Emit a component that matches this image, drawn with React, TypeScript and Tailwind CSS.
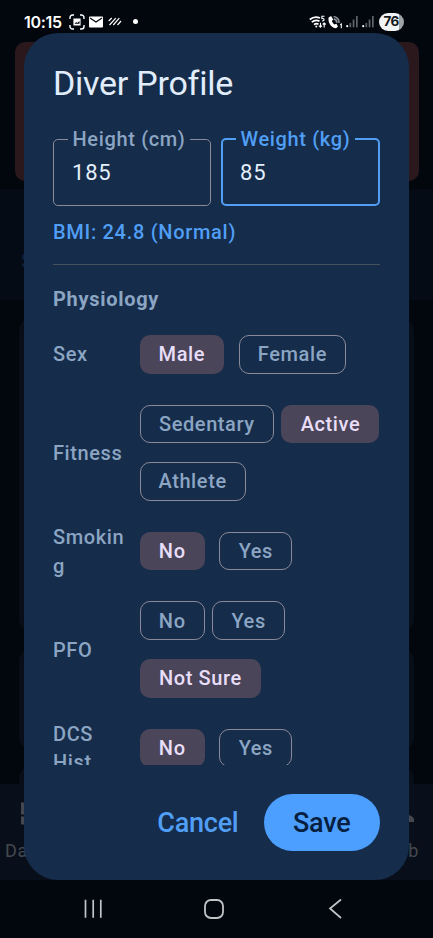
import React from "react";

type ChipProps = { label: string; selected?: boolean; width: string };

function Chip({ label, selected = false, width }: ChipProps) {
  const tone = selected ? "bg-[#4b4559] text-[#e8def8]" : "border-[1.3px] border-[#8b8a99] text-[#8ba5c3]";
  return (
    <div className="flex h-[57.6px] items-center">
      <button
        className={`flex h-[38.6px] items-center justify-center rounded-[10px] text-[20px] font-medium leading-none tracking-[0.6px] whitespace-nowrap ${width} ${tone}`}
      >
        {label}
      </button>
    </div>
  );
}

type RowProps = { label: string; gap?: string; children: React.ReactNode };

function OptionRow({ label, gap = "gap-x-[14.6px]", children }: RowProps) {
  return (
    <div className="flex shrink-0 items-center gap-[14.6px]">
      <div className="mt-[0.6px] -mb-[0.6px] w-[72px] shrink-0 text-[20px] font-medium leading-[28.8px] tracking-[0.6px] break-words text-[#8ba5c3]">
        {label}
      </div>
      <div className={`flex flex-1 flex-wrap ${gap}`}>{children}</div>
    </div>
  );
}

type FieldProps = { label: string; value: string; focused?: boolean };

function Field({ label, value, focused = false }: FieldProps) {
  return (
    <fieldset
      className={`h-[79px] min-w-0 flex-1 rounded-[5px] ${
        focused ? "border-[2.4px] border-[#519ef5] pl-[17.5px]" : "border-[1.3px] border-[#8b8a99] pl-[18px]"
      }`}
    >
      <legend
        className={`-ml-[4px] px-[4.5px] text-[20px] font-medium leading-[24px] tracking-[0.65px] whitespace-nowrap ${
          focused ? "text-[#519ef5]" : "text-[#8ba5c3]"
        }`}
      >
        {label}
      </legend>
      <div className="pt-[8px] text-[22px] leading-[28px] tracking-[0.8px] text-[#e4effc]">{value}</div>
    </fieldset>
  );
}

function SignalBars() {
  return (
    <svg className="h-[13px] w-[12px]" viewBox="0 0 12 13">
      <circle cx="1.2" cy="11.2" r="1.1" fill="#fff" />
      <g fill="#60646a">
        <rect x="3.5" y="8" width="1.7" height="4.3" />
        <rect x="6.7" y="4.5" width="1.7" height="7.8" />
        <rect x="10" y="1" width="1.7" height="11.3" />
      </g>
    </svg>
  );
}

function StatusBar() {
  return (
    <div className="flex h-[42px] items-center pt-[1.5px] pl-[24px] pr-[29.5px] font-['Inter',sans-serif] text-white">
      <span className="w-[39px] text-[16px] font-semibold leading-none tracking-[-0.3px] whitespace-nowrap">10:15</span>
      <svg className="ml-[6px] h-[16px] w-[16px]" viewBox="0 0 16 16" fill="none" stroke="#fff" strokeWidth="1.4">
        <path d="M1 5V3.5A2.5 2.5 0 0 1 3.5 1H5M11 1h1.5A2.5 2.5 0 0 1 15 3.5V5M15 11v1.5a2.5 2.5 0 0 1-2.5 2.5H11M5 15H3.5A2.5 2.5 0 0 1 1 12.5V11" />
        <path d="M4.4 4.5h7.2v7H4.4z" fill="#fff" stroke="none" />
        <path d="m5.5 9.7 1.7-1.6 1 1 2.3-2.2v2.8z" fill="#03070e" stroke="none" />
      </svg>
      <svg className="ml-[4px] h-[12px] w-[14px]" viewBox="0 0 14 12">
        <rect y="0.5" width="14" height="11" rx="0.8" fill="#fff" />
        <path d="m1 2 6 4 6-4" fill="none" stroke="#03070e" strokeWidth="1.2" />
      </svg>
      <svg className="ml-[5px] h-[9px] w-[14px]" viewBox="0 0 14 9" fill="none" stroke="#fff" strokeWidth="1.2">
        <path d="m.7 4 3-3M1.5 8l6.300-6.800M5.300 8l6-6.800M9.500 8l3.500-4" />
      </svg>
      <span className="ml-[10.5px] h-[5px] w-[5px] rounded-full bg-white" />

      <svg className="ml-auto h-[14px] w-[18px]" viewBox="0 0 18 14" fill="none" stroke="#fff" strokeWidth="1.7">
        <path d="M.8 4.5Q5.5.5 11 3M2.8 7.2Q6.5 4 10.5 6.3M5 9.6q2.5-2 4.5-.3" />
        <circle cx="7.3" cy="11.5" r="1" fill="#fff" stroke="none" />
        <path d="M15.5 1.2h-2.6v2.3c2.8-.5 3 2.6.2 2.4M11.5 7.8v4.5m-1.6-1.6 1.6 1.6 1.5-1.6M15.2 12.5V8m-1.5 1.5L15.2 8l1.6 1.5" strokeWidth="1.1" />
      </svg>
      <svg className="ml-[1px] h-[14px] w-[15px]" viewBox="0 0 15 14">
        <path d="M.6 2.600 3.100 1l2.100 3.400-1.300 1.500c.5 1.500 1.300 2.700 2.600 3.600l1.900-.700 1.600 2.700-1.900 1.700C3.600 13.200-.4 7.800.6 2.600z" fill="#fff" />
        <path d="M5.500 1.500a6 6 0 0 1 5.600 6.500M5.800 3.900a4 4 0 0 1 3 4" fill="none" stroke="#8a8d92" strokeWidth="1.7" />
        <path d="m12.200 9.800 1.100-.8v4.300" fill="none" stroke="#fff" strokeWidth="1.1" />
      </svg>
      <div className="ml-[3px] flex gap-[4px]">
        <SignalBars />
        <SignalBars />
      </div>
      <div className="ml-[4.5px] flex h-[17.5px] w-[25px] items-center justify-center rounded-full bg-linear-to-r from-[#f2f3f4] from-78% to-[#a0a3a6] to-78% text-[13.5px] font-bold leading-none tracking-[-0.6px] text-[#15181c]">
        76
      </div>
    </div>
  );
}

function DimmedApp() {
  return (
    <div className="flex h-[838px] flex-col overflow-hidden">
      <div className="mx-[14.5px] h-[138.5px] shrink-0 rounded-[10px] bg-[#2a181c]" />
      <div className="mt-[8px] flex h-[111px] shrink-0 items-center bg-[#040b15] pl-[21px] pt-[33px] text-[20px] font-medium text-[#0f213a]">
        S
      </div>
      <div className="flex h-[484px] shrink-0 flex-col gap-[14px] overflow-hidden px-[19px] pt-[17px]">
        <div className="h-[316px] shrink-0 rounded-[14px] bg-[#070e18]" />
        <div className="h-[104px] shrink-0 rounded-[14px] bg-[#070e18]" />
        <div className="h-[104px] shrink-0 rounded-[14px] bg-[#070e18]" />
      </div>
      <div className="flex h-[97px] shrink-0 justify-between bg-[#080f1a] pl-[5px] pr-[14px] pt-[18px] text-[#44484e]">
        <div className="flex flex-col items-start gap-[15px]">
          <svg className="ml-[16px] h-[23px] w-[22px]" viewBox="0 0 22 22" fill="currentColor">
            <path d="M0 0h10v12H0zM12 0h10v7H12zM0 14h10v8H0zM12 9h10v13H12z" />
          </svg>
          <span className="text-[18px] leading-[22px] tracking-[0.6px]">Data</span>
        </div>
        <div className="flex flex-col items-end gap-[15px]">
          <svg className="mr-[5px] h-[23px] w-[22px]" viewBox="0 0 22 23" fill="currentColor">
            <circle cx="11" cy="6" r="5.5" />
            <path d="M0 20v-2.5C0 14 7 12 11 12s11 2 11 5.500V20z" />
          </svg>
          <span className="text-[18px] leading-[22px] tracking-[0.6px]">Club</span>
        </div>
      </div>
    </div>
  );
}

function ProfileDialog() {
  return (
    <div className="absolute top-[33px] left-[24px] flex h-[847px] w-[385px] flex-col rounded-[34px] bg-[#152c4a] px-[29px] pb-[29px]">
      <h1 className="mt-[29px] h-[42px] shrink-0 text-[34px] leading-[42px] font-normal tracking-[-0.25px] text-[#e1edfb]">
        Diver Profile
      </h1>
      <div className="mt-[19px] flex h-[642px] shrink-0 flex-col overflow-hidden">
        <div className="mt-[4px] flex shrink-0 gap-[9.6px]">
          <Field label="Height (cm)" value="185" />
          <Field label="Weight (kg)" value="85" focused />
        </div>
        <p className="mt-[12px] shrink-0 text-[20px] font-medium leading-[29px] tracking-[0.7px] text-[#519ef5]">
          BMI: 24.8 (Normal)
        </p>
        <hr className="mt-[17px] shrink-0 border-t border-[#46505f]" />
        <h2 className="mt-[20px] shrink-0 text-[20px] font-bold leading-[29px] tracking-[0.7px] text-[#8ba5c3]">Physiology</h2>
        <div className="mt-[11.5px] flex flex-col gap-[12px]">
          <OptionRow label="Sex">
            <Chip label="Male" selected width="w-[84.5px]" />
            <Chip label="Female" width="w-[107.5px]" />
          </OptionRow>
          <OptionRow label="Fitness" gap="gap-x-[7.4px]">
            <Chip label="Sedentary" width="w-[134.5px]" />
            <Chip label="Active" selected width="w-[98px]" />
            <Chip label="Athlete" width="w-[106px]" />
          </OptionRow>
          <OptionRow label="Smoking">
            <Chip label="No" selected width="w-[65.3px]" />
            <Chip label="Yes" width="w-[72.7px]" />
          </OptionRow>
          <OptionRow label="PFO" gap="gap-x-[7.4px]">
            <Chip label="No" width="w-[65.3px]" />
            <Chip label="Yes" width="w-[72.7px]" />
            <Chip label="Not Sure" selected width="w-[121.5px]" />
          </OptionRow>
          <OptionRow label="DCS Hist">
            <Chip label="No" selected width="w-[65.3px]" />
            <Chip label="Yes" width="w-[72.7px]" />
          </OptionRow>
        </div>
      </div>
      <div className="mt-auto flex shrink-0 items-center justify-end gap-[25px] text-[27px] font-medium leading-none">
        <button className="pt-[2px] tracking-[-0.25px] text-[#519ef5]">Cancel</button>
        <button className="h-[57.5px] w-[116.5px] rounded-full bg-[#4c9fff] pt-[2px] tracking-[-0.2px] text-[#07203f]">Save</button>
      </div>
    </div>
  );
}

function SystemNav() {
  return (
    <div className="flex h-[58px] items-center bg-[#02070d] pl-[83px] text-[#c2c4c6]">
      <svg className="h-[20px] w-[20px]" viewBox="0 0 20 20" fill="none" stroke="currentColor" strokeWidth="1.7">
        <path d="M2.5 .8v18M10.2 .8v18M17.8 .8v18" />
      </svg>
      <svg className="ml-[100px] h-[22px] w-[22px]" viewBox="0 0 22 22" fill="none" stroke="currentColor" strokeWidth="1.8">
        <rect x="2" y="2" width="18" height="18" rx="6" />
      </svg>
      <svg className="ml-[103px] h-[22px] w-[16px]" viewBox="0 0 16 22" fill="none" stroke="currentColor" strokeWidth="1.7">
        <path d="M13 1.5 2 10.5l11 9.5" />
      </svg>
    </div>
  );
}

export default function App() {
  return (
    <div className="relative h-[938px] w-[433px] overflow-hidden bg-[#02060d] font-['Roboto',sans-serif]">
      <StatusBar />
      <DimmedApp />
      <SystemNav />
      <ProfileDialog />
    </div>
  );
}
